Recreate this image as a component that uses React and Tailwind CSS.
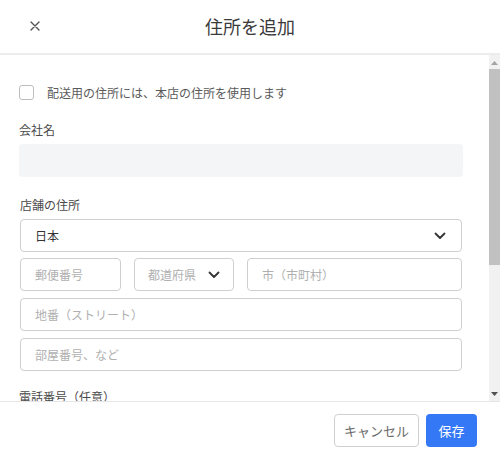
import React from "react";

function Chevron() {
  return (
    <svg width="12" height="8" viewBox="0 0 12 8" fill="none">
      <path d="M1.5 1.5L6 6L10.5 1.5" stroke="#333" strokeWidth="1.8" strokeLinecap="round" strokeLinejoin="round" />
    </svg>
  );
}

function Field({ placeholder, className = "" }) {
  return (
    <div className={`h-[33px] rounded-[4px] border border-[#cfcfcf] flex items-center px-[14px] text-[12px] text-[#b0b0b0] ${className}`}>
      {placeholder}
    </div>
  );
}

export default function App() {
  return (
    <div className="w-[500px] h-[459px] bg-white flex flex-col overflow-hidden font-['Noto_Sans_CJK_JP','Noto_Sans',sans-serif]">
      <div className="h-[55px] shrink-0 border-b-2 border-[#ececec] flex items-center relative">
        <div className="pl-[30px] pb-[1px]">
          <svg width="10" height="10" viewBox="0 0 10 10">
            <path d="M1 1L9 9M9 1L1 9" stroke="#555" strokeWidth="1.4" strokeLinecap="round" />
          </svg>
        </div>
        <div className="absolute left-0 right-0 text-center text-[18px] text-[#3a3a3a] pointer-events-none">住所を追加</div>
      </div>
      <div className="flex-1 flex overflow-hidden">
        <div className="flex-1 pl-[19px] pr-[26px] pt-[30px] overflow-hidden">
          <div className="flex items-center h-[15px]">
            <div className="w-[15px] h-[15px] rounded-[3px] border border-[#bdbdbd] bg-white" />
            <span className="ml-[13px] text-[12px] text-[#5a5a5a] leading-none">配送用の住所には、本店の住所を使用します</span>
          </div>
          <div className="mt-[22px] text-[12px] leading-[16px] text-[#4a4a4a]">会社名</div>
          <div className="mt-[6px] h-[33px] rounded-[4px] bg-[#f4f5f7]" />
          <div className="mt-[20px] text-[12px] leading-[16px] text-[#4a4a4a] pl-[1px]">店舗の住所</div>
          <div className="mt-[6px] ml-[1px] mr-[1px] h-[33px] rounded-[4px] border border-[#cfcfcf] flex items-center justify-between pl-[14px] pr-[15px]">
            <span className="text-[12px] text-[#333]">日本</span>
            <Chevron />
          </div>
          <div className="mt-[6px] ml-[1px] mr-[1px] flex gap-[13px]">
            <Field placeholder="郵便番号" className="w-[101px]" />
            <div className="w-[100px] h-[33px] rounded-[4px] border border-[#cfcfcf] flex items-center justify-between pl-[13px] pr-[13px] text-[12px] text-[#b0b0b0]">
              <span>都道府県</span>
              <Chevron />
            </div>
            <Field placeholder="市（市町村）" className="flex-1" />
          </div>
          <div className="mt-[7px] ml-[1px] mr-[1px]">
            <Field placeholder="地番（ストリート）" />
          </div>
          <div className="mt-[7px] ml-[1px] mr-[1px]">
            <Field placeholder="部屋番号、など" />
          </div>
          <div className="mt-[18px] text-[12px] leading-[16px] text-[#4a4a4a]">電話番号（任意）</div>
        </div>
        <div className="w-[11px] bg-[#f1f1f1] flex flex-col items-center">
          <div className="h-[14px] flex items-center justify-center pt-[2px]">
            <svg width="7" height="4" viewBox="0 0 7 4"><path d="M3.5 0L7 4H0z" fill="#a3a3a3" /></svg>
          </div>
          <div className="w-[11px] h-[196px] bg-[#c1c1c1]" />
          <div className="flex-1" />
          <div className="h-[12px] flex items-center justify-center pb-[2px]">
            <svg width="7" height="4" viewBox="0 0 7 4"><path d="M0 0H7L3.5 4z" fill="#505050" /></svg>
          </div>
        </div>
      </div>
      <div className="h-[58px] shrink-0 border-t border-[#e6e6e6] flex items-center justify-end gap-[7px] pr-[23px]">
        <div className="w-[85px] h-[33px] rounded-[4px] border border-[#cfcfcf] flex items-center justify-center text-[13px] text-[#6a6a6a]">キャンセル</div>
        <div className="w-[51px] h-[33px] rounded-[4px] bg-[#3578f6] flex items-center justify-center text-[13px] text-white">保存</div>
      </div>
    </div>
  );
}
